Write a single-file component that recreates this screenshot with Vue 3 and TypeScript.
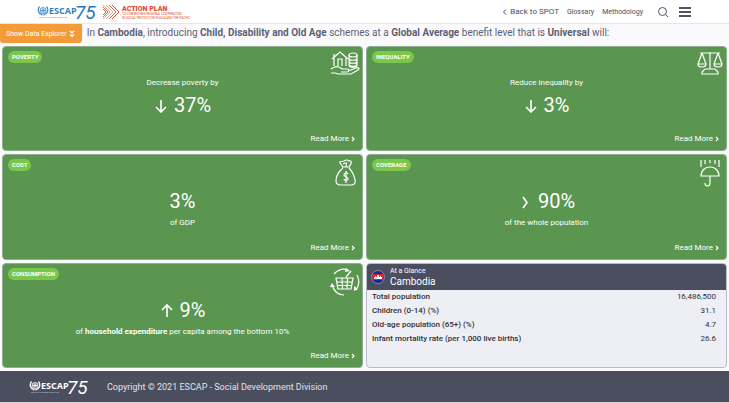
<script setup lang="ts">
interface Card {
  tag: string
  icon: 'house' | 'scales' | 'bag' | 'umbrella' | 'basket'
  lead?: string
  arrow?: 'down' | 'up' | 'right'
  value: string
  before?: string
  strong?: string
  after?: string
}

const cards: Card[] = [
  { tag: 'POVERTY', icon: 'house', lead: 'Decrease poverty by', arrow: 'down', value: '37%' },
  { tag: 'INEQUALITY', icon: 'scales', lead: 'Reduce inequality by', arrow: 'down', value: '3%' },
  { tag: 'COST', icon: 'bag', value: '3%', before: 'of GDP' },
  { tag: 'COVERAGE', icon: 'umbrella', arrow: 'right', value: '90%', before: 'of the whole population' },
  {
    tag: 'CONSUMPTION',
    icon: 'basket',
    arrow: 'up',
    value: '9%',
    before: 'of ',
    strong: 'household expenditure',
    after: ' per capita among the bottom 10%',
  },
]

const arrows: Record<string, string> = {
  down: 'M7 3V15M2 10L7 15L12 10',
  up: 'M7 15V3M2 8L7 3L12 8',
  right: 'M5 4L9 9.5L5 15',
}

const facts: [string, string][] = [
  ['Total population', '16,486,500'],
  ['Children (0-14) (%)', '31.1'],
  ['Old-age population (65+) (%)', '4.7'],
  ['Infant mortality rate (per 1,000 live births)', '26.6'],
]
</script>

<template>
  <div class="page">
    <header class="top">
      <div class="brand">
        <a href="#" class="logo" aria-label="ESCAP 75">
          <svg width="62" height="20" viewBox="0 0 62 20">
            <g fill="none" stroke="#4a90c8" stroke-width="0.8">
              <circle cx="6" cy="8.500" r="3" />
              <path d="M3 8.500H9M6 5.500V11.500M4 6.500L8 10.500M8 6.500L4 10.500" />
              <path d="M2.500 4.500C0 8 1.500 12 5.500 13M9.500 4.500C12 8 10.500 12 6.500 13" stroke-width="1.300" />
            </g>
            <text x="12" y="12" class="escap" fill="#2f7fbd">ESCAP</text>
            <text x="2" y="16" class="motto" fill="#4a90c8">MOVING FORWARD TOGETHER</text>
            <text x="38" y="17" class="years" fill="#2374b8">75</text>
          </svg>
        </a>
        <a href="#" class="logo" aria-label="Action Plan">
          <svg width="92" height="18" viewBox="0 0 92 18">
            <g fill="none" stroke-width="1">
              <path d="M1 2L8 9L1 16M4 2L11 9L4 16" stroke="#e9a982" />
              <path d="M7 2L14 9L7 16" stroke="#e2673e" />
              <path d="M10 2L17 9L10 16" stroke="#d94b2d" />
              <path d="M1 6L4 9L1 12M1 4L6 9L1 14" stroke="#d9653f" />
            </g>
            <text x="20" y="8" class="plan" fill="#dc4d2e">ACTION PLAN</text>
            <text x="20" y="12" class="plan-sub" fill="#dc4d2e">TO STRENGTHEN REGIONAL COOPERATION</text>
            <text x="20" y="16" class="plan-sub" fill="#dc4d2e">IN SOCIAL PROTECTION IN ASIA AND THE PACIFIC</text>
          </svg>
        </a>
      </div>
      <nav class="nav">
        <a href="#" class="back">
          <svg width="5" height="8" viewBox="0 0 5 8"><path d="M4 1.500L1.500 4L4 6.500" class="line" /></svg>
          Back to SPOT
        </a>
        <a href="#">Glossary</a>
        <a href="#">Methodology</a>
        <button type="button" class="icon-btn search" aria-label="Search">
          <svg width="12" height="12" viewBox="0 0 12 12"><circle cx="5.500" cy="5.500" r="4" class="line" /><path d="M8.500 8.500L11 11" class="line" /></svg>
        </button>
        <button type="button" class="icon-btn" aria-label="Menu">
          <svg width="12" height="10" viewBox="0 0 12 10"><path d="M0 1H12M0 5H12M0 9H12" class="line thick" /></svg>
        </button>
      </nav>
    </header>

    <div class="intro">
      <button type="button" class="explorer">
        Show Data Explorer
        <svg width="6" height="8" viewBox="0 0 6 8"><path d="M1 1L3 3L5 1M1 4.500L3 6.500L5 4.500" fill="none" stroke="#fff" stroke-width="1.200" /></svg>
      </button>
      <p>
        In <b>Cambodia</b>, introducing <b>Child, Disability and Old Age</b> schemes at a
        <b>Global Average</b> benefit level that is <b>Universal</b> will:
      </p>
    </div>

    <main class="grid">
      <section v-for="card in cards" :key="card.tag" class="card">
        <div class="card-top">
          <h2 class="tag">{{ card.tag }}</h2>
          <svg class="pict" width="30" height="28" viewBox="0 0 30 28">
            <template v-if="card.icon === 'house'">
              <path d="M2 8L10 1L18 8M4 7V15M16 7V15M8 15V8H12V15M4 3V6" />
              <ellipse cx="23" cy="4" rx="4" ry="2" />
              <path d="M19 4V14C19 17 27 17 27 14V4M19 7C19 10 27 10 27 7M19 10C19 13 27 13 27 10M19 13C19 16 27 16 27 13" />
              <path d="M1 18C5 15 9 15 12 18H17C20 18 19 21 17 21H11M18 20L26 17C29 16 30 18 28 19L21 23H8L5 22H1" />
            </template>
            <template v-else-if="card.icon === 'scales'">
              <path d="M6 2H26M16 1V18M8 2L4 13M8 2L12 13M24 2L20 13M24 2L28 13M4 13H12C12 17 4 17 4 13ZM20 13H28C28 17 20 17 20 13ZM11 18H21L24 21V23H8V21Z" />
            </template>
            <template v-else-if="card.icon === 'bag'">
              <path d="M13 8L10 4C9 2 12 3 14 2C17 0 18 1 19 2C22 1 22 4 19 8M12 8H20M13 9C8 13 6 18 6 22C6 25 8 26 11 26H21C24 26 26 24 25 21C24 16 22 12 19 9M13 5C17 3 17 3 16 8" />
              <path d="M18 15C17 13 14 14 14 16C14 18 18 17 18 20C18 22 14 22 14 20M16 12V24" />
            </template>
            <template v-else-if="card.icon === 'umbrella'">
              <path d="M7 1V8M11 1V5M16 1V4M21 1V5M25 1V8" />
              <path d="M7 17C7 5 25 5 25 17ZM16 17V24C16 28 11 28 11 24" />
            </template>
            <template v-else>
              <path d="M6 10H23L21 21H8ZM7 14H22M7 17.500H22M12 10L12.500 21M17.500 10L17 21M16 9L21 3" />
              <path d="M4 6C8 2 13 0 18 2M27 7C30 13 29 18 26 22M14 27C8 27 4 23 2 17" />
              <path class="tip" d="M16 0L20 3L15 4ZM28 21L24 23V18ZM0 19L2 15L5 19Z" />
            </template>
          </svg>
        </div>
        <div class="body">
          <p v-if="card.lead" class="note">{{ card.lead }}</p>
          <p class="value">
            <svg v-if="card.arrow" width="14" height="16" viewBox="0 0 14 16"><path :d="arrows[card.arrow]" /></svg>
            <span>{{ card.value }}</span>
          </p>
          <p v-if="card.before" class="note">{{ card.before }}<b v-if="card.strong">{{ card.strong }}</b>{{ card.after }}</p>
        </div>
        <a href="#" class="more">
          Read More
          <svg width="4" height="6" viewBox="0 0 4 6"><path d="M1 1L3 3L1 5" /></svg>
        </a>
      </section>

      <section class="glance">
        <header class="glance-head">
          <svg width="14" height="14" viewBox="0 0 14 14">
            <clipPath id="flag"><circle cx="7" cy="7" r="6" /></clipPath>
            <g clip-path="url(#flag)">
              <rect width="14" height="14" fill="#0b2a98" />
              <rect y="4" width="14" height="6" fill="#d9232e" />
              <path d="M3 9V7H4V6H5V7H6V5H8V7H9V6H10V7H11V9Z" fill="#fff" />
            </g>
            <circle cx="7" cy="7" r="6.500" fill="none" stroke="#9da0b4" stroke-width="0.7" />
          </svg>
          <div>
            <p class="glance-label">At a Glance</p>
            <h2>Cambodia</h2>
          </div>
        </header>
        <table>
          <tbody>
            <tr v-for="[label, amount] in facts" :key="label">
              <th scope="row">{{ label }}</th>
              <td>{{ amount }}</td>
            </tr>
          </tbody>
        </table>
      </section>
    </main>

    <footer class="foot">
      <svg width="62" height="20" viewBox="0 0 62 20" role="img" aria-label="ESCAP 75">
        <g fill="none" stroke="#fff" stroke-width="0.8">
          <circle cx="6" cy="8.500" r="3" />
          <path d="M3 8.500H9M6 5.500V11.500M4 6.500L8 10.500M8 6.500L4 10.500" />
          <path d="M2.500 4.500C0 8 1.500 12 5.500 13M9.500 4.500C12 8 10.500 12 6.500 13" stroke-width="1.300" />
        </g>
        <text x="12" y="12" class="escap" fill="#fff">ESCAP</text>
        <text x="2" y="16" class="motto" fill="#c9cbd8">MOVING FORWARD TOGETHER</text>
        <text x="38" y="17" class="years" fill="#fff">75</text>
      </svg>
      <p>Copyright © 2021 ESCAP - Social Development Division</p>
    </footer>
  </div>
</template>

<style>
body {
  margin: 0;
  background: #fafafc;
}
</style>

<style scoped>
.page {
  min-height: 100vh;
  box-sizing: border-box;
  display: flex;
  flex-direction: column;
  font-family: Roboto, "Liberation Sans", sans-serif;
  font-size: 8px;
  line-height: 12px;
  color: #4b4e5f;
  border-bottom: 1px solid #d5d6dc;
}
p, h2 {
  margin: 0;
  font-weight: 400;
}
a {
  color: inherit;
  text-decoration: none;
}
button {
  border: 0;
  padding: 0;
  background: none;
  font: inherit;
  color: inherit;
}
svg {
  display: block;
  flex: none;
}
.top {
  display: flex;
  justify-content: space-between;
  align-items: center;
  height: 24px;
  padding: 0 38px 0 37px;
  background: #fff;
  border-bottom: 1px solid #e6e6ea;
  box-sizing: border-box;
}
.brand, .nav {
  display: flex;
  align-items: center;
}
.brand {
  gap: 3px;
}
.nav {
  gap: 8px;
  font-size: 7px;
}
.back {
  display: flex;
  align-items: center;
  gap: 3px;
  font-size: 8px;
}
.search {
  margin-left: 6px;
}
.icon-btn + .icon-btn {
  margin-left: 2px;
}
.line {
  fill: none;
  stroke: #4b5566;
  stroke-width: 1;
}
.thick {
  stroke-width: 2;
}
.escap {
  font: 700 9px "Open Sans", sans-serif;
}
.motto {
  font: 2px Roboto, sans-serif;
}
.years {
  font: italic 400 19px Roboto, sans-serif;
}
.plan {
  font: 900 7px Roboto, sans-serif;
}
.plan-sub {
  font: 400 3px Roboto, sans-serif;
}
.intro {
  display: flex;
  align-items: flex-start;
  gap: 5px;
  height: 22px;
  background: #fafafc;
}
.intro p {
  font-size: 10px;
  line-height: 18px;
  color: #5d6074;
}
.explorer {
  display: flex;
  align-items: center;
  gap: 2px;
  height: 19px;
  padding: 0 7px 0 6px;
  font-size: 7px;
  background: #f29b38;
  color: #fff;
  border-radius: 0 0 3px 3px;
}
.grid {
  flex: 1;
  display: grid;
  grid-template-columns: 1fr 1fr;
  grid-auto-rows: 1fr;
  gap: 3px;
  padding: 0 2px 3px;
}
.card {
  display: flex;
  flex-direction: column;
  background: #5a9650;
  border: 1px solid #8fae90;
  border-radius: 4px;
  box-sizing: border-box;
  color: #fff;
}
.card-top {
  display: flex;
  justify-content: space-between;
  align-items: flex-start;
  height: 14px;
  padding: 4px 2px 0 5px;
}
.tag {
  padding: 0 4px;
  border-radius: 6px;
  background: #7ac74b;
  font-size: 6px;
  font-weight: 700;
  line-height: 12px;
}
.card svg path, .card svg ellipse {
  fill: none;
  stroke: #fff;
  stroke-width: 1.2;
}
.card svg .tip {
  fill: #fff;
  stroke: none;
}
.body {
  flex: 1;
  display: flex;
  flex-direction: column;
  align-items: center;
  justify-content: center;
}
.value {
  display: flex;
  align-items: center;
  gap: 6px;
  font-size: 20px;
  line-height: 32px;
}
.card .value svg path {
  stroke-width: 1.6;
}
.more {
  display: flex;
  align-items: center;
  align-self: flex-end;
  gap: 2px;
  padding: 0 7px 5px;
}
.glance {
  background: #eeeff5;
  border: 1px solid #b9bbc8;
  border-radius: 4px;
  overflow: hidden;
  box-sizing: border-box;
}
.glance-head {
  display: flex;
  align-items: center;
  gap: 5px;
  height: 26px;
  padding: 0 4px;
  background: #4b4e5f;
  color: #fff;
}
.glance-label {
  font-size: 7px;
  line-height: 10px;
}
h2 {
  font-size: 10px;
}
table {
  width: 100%;
  border-collapse: collapse;
  color: #2d2f38;
}
th, td {
  height: 14px;
  padding: 0 5px;
  line-height: 12px;
}
th {
  text-align: left;
  font-weight: 500;
}
td {
  padding-right: 10px;
  text-align: right;
}
.foot {
  display: flex;
  align-items: center;
  gap: 16px;
  height: 31px;
  padding: 0 29px;
  background: #4b4e5f;
  color: #e2e3ea;
}
.foot p {
  font-size: 9px;
}
</style>
